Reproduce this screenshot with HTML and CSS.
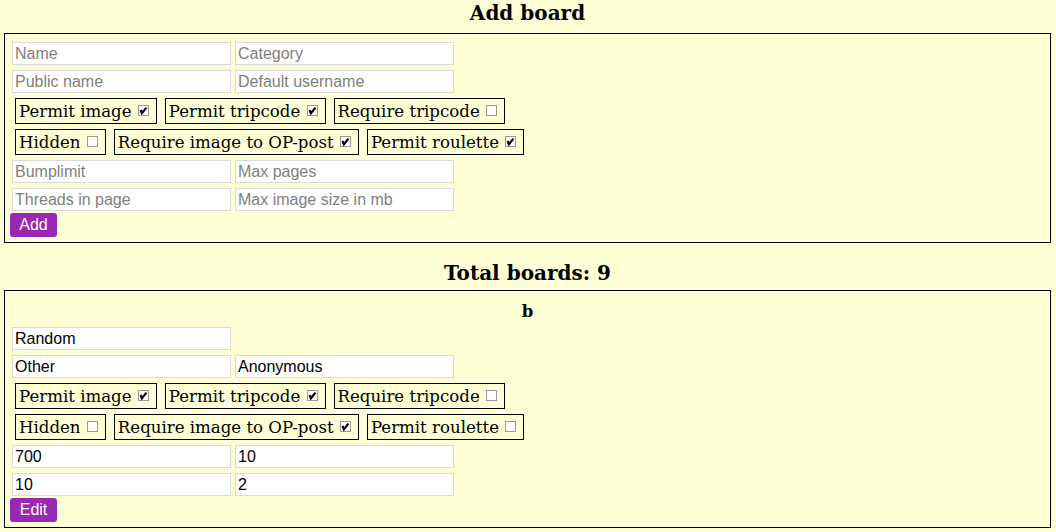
FILE: index.html
```html
<!DOCTYPE html>
<html>
<head>
<meta charset="utf-8">
<link rel="stylesheet" href="styles.css">
<title>Boards</title>
</head>
<body>
<h3 class="title first">Add board</h3>
<div class="panel">
  <div class="row"><input class="field" placeholder="Name"><input class="field" placeholder="Category"></div>
  <div class="row"><input class="field" placeholder="Public name"><input class="field" placeholder="Default username"></div>
  <div class="checks">
    <label class="check">Permit image <span class="cb"><svg width="11" height="11" viewBox="0 0 11 11"><rect x="0.5" y="0.5" width="10" height="10" fill="#fff" stroke="#9a9a9a"/><polyline points="2.6,5 3.9,8.4 8.4,2.6" fill="none" stroke="#000" stroke-width="2.2"/></svg></span></label>
    <label class="check">Permit tripcode <span class="cb"><svg width="11" height="11" viewBox="0 0 11 11"><rect x="0.5" y="0.5" width="10" height="10" fill="#fff" stroke="#9a9a9a"/><polyline points="2.6,5 3.9,8.4 8.4,2.6" fill="none" stroke="#000" stroke-width="2.2"/></svg></span></label>
    <label class="check">Require tripcode <span class="cb"><svg width="11" height="11" viewBox="0 0 11 11"><rect x="0.5" y="0.5" width="10" height="10" fill="#fff" stroke="#9a9a9a"/></svg></span></label>
  </div>
  <div class="checks">
    <label class="check">Hidden <span class="cb"><svg width="11" height="11" viewBox="0 0 11 11"><rect x="0.5" y="0.5" width="10" height="10" fill="#fff" stroke="#9a9a9a"/></svg></span></label>
    <label class="check">Require image to OP-post <span class="cb"><svg width="11" height="11" viewBox="0 0 11 11"><rect x="0.5" y="0.5" width="10" height="10" fill="#fff" stroke="#9a9a9a"/><polyline points="2.6,5 3.9,8.4 8.4,2.6" fill="none" stroke="#000" stroke-width="2.2"/></svg></span></label>
    <label class="check">Permit roulette <span class="cb"><svg width="11" height="11" viewBox="0 0 11 11"><rect x="0.5" y="0.5" width="10" height="10" fill="#fff" stroke="#9a9a9a"/><polyline points="2.6,5 3.9,8.4 8.4,2.6" fill="none" stroke="#000" stroke-width="2.2"/></svg></span></label>
  </div>
  <div class="row"><input class="field" placeholder="Bumplimit"><input class="field" placeholder="Max pages"></div>
  <div class="row last"><input class="field" placeholder="Threads in page"><input class="field" placeholder="Max image size in mb"></div>
  <button class="btn">Add</button>
</div>

<h3 class="title">Total boards: 9</h3>
<div class="panel">
  <h4 class="board-name">b</h4>
  <div class="row"><input class="field" value="Random"></div>
  <div class="row"><input class="field" value="Other"><input class="field" value="Anonymous"></div>
  <div class="checks">
    <label class="check">Permit image <span class="cb"><svg width="11" height="11" viewBox="0 0 11 11"><rect x="0.5" y="0.5" width="10" height="10" fill="#fff" stroke="#9a9a9a"/><polyline points="2.6,5 3.9,8.4 8.4,2.6" fill="none" stroke="#000" stroke-width="2.2"/></svg></span></label>
    <label class="check">Permit tripcode <span class="cb"><svg width="11" height="11" viewBox="0 0 11 11"><rect x="0.5" y="0.5" width="10" height="10" fill="#fff" stroke="#9a9a9a"/><polyline points="2.6,5 3.9,8.4 8.4,2.6" fill="none" stroke="#000" stroke-width="2.2"/></svg></span></label>
    <label class="check">Require tripcode <span class="cb"><svg width="11" height="11" viewBox="0 0 11 11"><rect x="0.5" y="0.5" width="10" height="10" fill="#fff" stroke="#9a9a9a"/></svg></span></label>
  </div>
  <div class="checks">
    <label class="check">Hidden <span class="cb"><svg width="11" height="11" viewBox="0 0 11 11"><rect x="0.5" y="0.5" width="10" height="10" fill="#fff" stroke="#9a9a9a"/></svg></span></label>
    <label class="check">Require image to OP-post <span class="cb"><svg width="11" height="11" viewBox="0 0 11 11"><rect x="0.5" y="0.5" width="10" height="10" fill="#fff" stroke="#9a9a9a"/><polyline points="2.6,5 3.9,8.4 8.4,2.6" fill="none" stroke="#000" stroke-width="2.2"/></svg></span></label>
    <label class="check">Permit roulette <span class="cb"><svg width="11" height="11" viewBox="0 0 11 11"><rect x="0.5" y="0.5" width="10" height="10" fill="#fff" stroke="#9a9a9a"/></svg></span></label>
  </div>
  <div class="row"><input class="field" value="700"><input class="field" value="10"></div>
  <div class="row last"><input class="field" value="10"><input class="field" value="2"></div>
  <button class="btn">Edit</button>
</div>
</body>
</html>
```
FILE: styles.css
```css
html, body {
  margin: 0;
  padding: 0;
  background: #ffffd6;
}
body {
  padding: 0 5px 0 4px;
  font-family: "DejaVu Serif", serif;
  color: #000;
}
.title {
  margin: 17px 0 4px;
  font-size: 20px;
  line-height: 26px;
  text-align: center;
  font-weight: bold;
}
.title.first {
  margin-top: 0;
  margin-bottom: 7px;
}
.panel {
  border: 1px solid #000;
  padding: 8px 7px 5px 7px;
}
.board-name {
  margin: 0 0 2px;
  font-size: 16.5px;
  line-height: 26px;
  text-align: center;
  font-weight: bold;
}
.row {
  display: flex;
  gap: 4px;
  margin-bottom: 5px;
}
.row.last {
  margin-bottom: 2px;
}
.field {
  box-sizing: border-box;
  width: 219px;
  height: 23px;
  margin: 0;
  padding: 0 2px;
  border: 1px solid #dadada;
  background: #fff;
  font-family: "Liberation Sans", Arial, sans-serif;
  font-size: 16px;
  color: #000;
  outline: none;
}
.field::placeholder {
  color: #808080;
}
.checks {
  display: flex;
  gap: 8px;
  padding-left: 3px;
  margin-bottom: 5px;
}
.check {
  display: flex;
  align-items: center;
  box-sizing: border-box;
  height: 26px;
  border: 1px solid #000;
  padding: 0 4px 0 3px;
  font-size: 16.6px;
  white-space: pre;
}
.cb {
  display: inline-flex;
  margin-left: 1px;
  margin-right: 3px;
  margin-top: -1px;
}
.btn {
  display: block;
  box-sizing: border-box;
  width: 47px;
  height: 24px;
  margin: 0 0 0 -2px;
  padding: 0;
  border: none;
  border-radius: 3px;
  background: #9c27b0;
  color: #fff;
  font-family: "Liberation Sans", Arial, sans-serif;
  font-size: 16px;
}
```
